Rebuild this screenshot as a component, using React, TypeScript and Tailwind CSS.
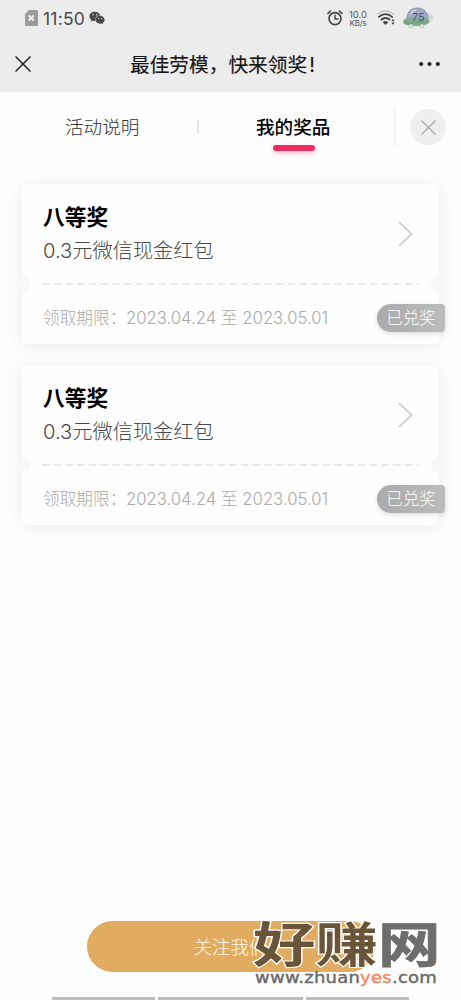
import { FaWeixin } from "react-icons/fa";

const prizes = [
  { id: 1, level: "八等奖", name: "0.3元微信现金红包", start: "2023.04.24", end: "2023.05.01", status: "已兑奖" },
  { id: 2, level: "八等奖", name: "0.3元微信现金红包", start: "2023.04.24", end: "2023.05.01", status: "已兑奖" },
];

type Prize = (typeof prizes)[number];

export default function App() {
  return (
    <div className="relative flex h-[1000px] w-[461px] flex-col overflow-hidden bg-[#fdfdfd] font-['Inter','Noto_Sans_CJK_SC',sans-serif]">
      <header className="h-[92px] shrink-0 bg-[#ececec]">
        <StatusBar />
        <TitleBar />
      </header>
      <Tabs />
      <main className="flex flex-col gap-[21px] px-[22px] pt-[22px]">
        {prizes.map((prize) => (
          <PrizeCard key={prize.id} prize={prize} />
        ))}
      </main>
      <footer className="mt-auto flex flex-col items-center">
        <button className="h-[51px] w-[288px] rounded-full bg-[#e2ac60] text-[18.500px] leading-[53px] font-light text-[#fff8ea]">
          关注我们
        </button>
        <div className="mt-[25px] flex h-[3px] w-[357px] gap-[3px]">
          <span className="w-[103px] bg-[#bdbdbd]" />
          <span className="w-[145px] bg-[#bdbdbd]" />
          <span className="flex-1 bg-[#bdbdbd]" />
        </div>
      </footer>
      <Watermark />
    </div>
  );
}

function StatusBar() {
  return (
    <div className="flex h-9 items-center pl-[25px] text-[#4a4a4a]">
      <svg className="h-4 w-[13px]" viewBox="0 0 13 16">
        <path d="M4 0h7.500Q13 0 13 1.500v13Q13 16 11.500 16h-10Q0 16 0 14.500V4Z" fill="#9b9b9b" />
        <path d="M3.800 5.500l5 5M8.800 5.500l-5 5" stroke="#f2f2f2" strokeWidth="1.900" />
      </svg>
      <span className="ml-[5px] w-[42px] pt-[2px] text-[17.500px] leading-5 tracking-[0.2px] whitespace-nowrap">11:50</span>
      <FaWeixin className="ml-[4px] size-[16px]" />
      <svg className="ml-[222px] size-4" viewBox="0 0 16 16" fill="none" stroke="#414141" strokeLinecap="round">
        <circle cx="8" cy="8.600" r="6" strokeWidth="1.600" />
        <path d="M8 5.200v3.800h3" strokeWidth="1.400" />
        <path d="M1 3.400l2.500-2.200M15 3.400l-2.500-2.200" strokeWidth="1.600" />
      </svg>
      <div className="ml-[5px] w-5 text-center leading-[9px] text-[#555]">
        <div className="text-[9.500px]">10.0</div>
        <div className="text-[8px] leading-[8px] tracking-[-0.2px]">KB/s</div>
      </div>
      <svg className="ml-[8px] h-4 w-[20px]" viewBox="0 0 20 16" fill="none">
        <path d="M1 4.500Q9.500-3 18 4.500" stroke="#c6c6c6" strokeWidth="1.300" />
        <path d="M2.300 7.300Q9.500 1 16.700 7.300" stroke="#444" strokeWidth="1.700" />
        <path d="M4.900 10Q9.500 6 14.100 10" stroke="#444" strokeWidth="1.700" />
        <path d="M6.700 12.300Q9.500 9.500 12.300 12.300L9.500 15Z" fill="#444" />
        <path d="M15.300 11.300l1.700-2.200L18.700 11.300ZM15.300 12.600l1.700 2.200 1.700-2.200Z" fill="#444" />
      </svg>
      <CarBattery />
    </div>
  );
}

function CarBattery() {
  return (
    <svg className="ml-[6px] h-[22px] w-[32px]" viewBox="0 0 32 22">
      <ellipse cx="26" cy="11" rx="5" ry="5" fill="#d5d7d5" />
      <path d="M5 12C5 4 10 1 15.500 1S26 5 26 12Z" fill="#a1a9c4" stroke="#7b849d" strokeWidth="0.800" />
      <path d="M9 7q1.500-4 5-4" fill="none" stroke="#dfe5ef" strokeWidth="1.200" />
      <path d="M1 14q3-4 10-3h14q3 1 2 5-4 3-12 3T2 17Z" fill="#82aa8e" />
      <path d="M2 15q5 2 9 1t14-1" fill="none" stroke="#6b987b" />
      <circle cx="9" cy="19" r="1.900" fill="#f1f1e9" stroke="#99af9d" strokeWidth="0.700" />
      <circle cx="20" cy="19" r="1.900" fill="#f1f1e9" stroke="#99af9d" strokeWidth="0.700" />
      <text x="10" y="14" fontSize="11" fill="#4b5678">75</text>
    </svg>
  );
}

function TitleBar() {
  return (
    <div className="flex h-14 items-center pr-[21px] pl-[15px]">
      <svg className="size-4" viewBox="0 0 16 16" stroke="#222" strokeWidth="1.500">
        <path d="M0.500 0.500l15 15M15.500 0.500l-15 15" />
      </svg>
      <h1 className="ml-[99px] pt-px text-[19.700px] leading-7 whitespace-nowrap text-[#161616] [-webkit-text-stroke:0.15px_#161616]">
        最佳劳模，快来领奖<span className="ml-[2px]">!</span>
      </h1>
      <svg className="ml-auto h-1 w-[21px]" viewBox="0 0 21 4" fill="#161616">
        <circle cx="2.200" cy="2" r="2" />
        <circle cx="10.500" cy="2" r="2" />
        <circle cx="18.800" cy="2" r="2" />
      </svg>
    </div>
  );
}

function Tabs() {
  return (
    <nav className="flex h-[70px] shrink-0 items-center text-[18.600px] leading-7 whitespace-nowrap">
      <a className="ml-[65px] w-[75px] font-light text-[#333]">活动说明</a>
      <span className="ml-[57px] h-[14px] w-[2px] bg-[#e6e6e6]" />
      <a className="relative ml-[57px] w-[75px] font-medium text-black">
        我的奖品
        <span className="absolute top-[32px] left-[17px] h-[6px] w-[42px] rounded-full bg-[#ea2e63] shadow-[0_2px_5px_#f9b8ca]" />
      </a>
      <span className="ml-[61px] h-[38px] w-[4px] bg-linear-to-r from-transparent to-[#f0f0f0]" />
      <button className="ml-[14px] flex size-9 items-center justify-center rounded-full bg-[#efefef]">
        <svg className="size-[15px]" viewBox="0 0 15 15" stroke="#aaa" strokeWidth="1.400">
          <path d="M0.500 0.500l14 14M14.500 0.500l-14 14" />
        </svg>
      </button>
    </nav>
  );
}

function PrizeCard({ prize }: { prize: Prize }) {
  return (
    <section className="relative h-[160px] rounded-[6px] bg-[#fefefe] shadow-[0_2px_18px_rgba(0,0,0,0.07)]">
      <div className="flex h-[99px] items-center justify-between pr-[26px] pl-[21px]">
        <div className="whitespace-nowrap">
          <h2 className="text-[21.700px] leading-[34px] font-bold text-black">{prize.level}</h2>
          <p className="text-[20.200px] leading-[34px] font-light text-[#4a4a4a]">{prize.name}</p>
        </div>
        <svg className="h-[26px] w-[15px]" viewBox="0 0 15 26" fill="none" stroke="#c9c9c9" strokeWidth="1.700">
          <path d="M1 1l12.500 12L1 25" />
        </svg>
      </div>
      <svg className="mx-[20px] block h-[2px] w-[377px]" viewBox="0 0 377 2">
        <path d="M0 1h377" stroke="#e2e2e2" strokeWidth="1.500" strokeDasharray="7.500 4.200" />
      </svg>
      <div className="flex h-[59px] items-center pt-[8px] pl-[21px] text-[16.700px] font-light text-[#aaa]">
        <span className="w-[83px] whitespace-nowrap">领取期限：</span>
        <span className="whitespace-nowrap">
          {prize.start} 至 {prize.end}
        </span>
        <span className="-mt-px -mr-[6px] ml-auto h-7 w-[68px] rounded-l-[14px] rounded-r-[4px] bg-linear-to-r from-[#aaa] to-[#bcbcbc] text-center text-[16.500px] leading-7 text-white shadow-[0_2px_5px_rgba(0,0,0,0.12)]">
          {prize.status}
        </span>
      </div>
      <span className="absolute top-[92px] -left-px h-4 w-[9px] rounded-r-full bg-[#f7f7f7]" />
      <span className="absolute top-[92px] -right-px h-4 w-[9px] rounded-l-full bg-[#f7f7f7]" />
    </section>
  );
}

function Watermark() {
  return (
    <div className="absolute top-[920px] left-[253px] w-[190px] whitespace-nowrap">
      <div className="flex h-[50px] origin-top-left scale-y-[0.77] text-[62.500px] leading-[63px] font-bold text-[#6b5539] [-webkit-text-stroke:3px_#fff] [paint-order:stroke_fill]">
        <span>好</span>
        <span>赚</span>
        <span className="text-[#6d6d6d] [-webkit-text-stroke:1px_#6d6d6d]">网</span>
      </div>
      <div className="ml-[2px] origin-left scale-x-[1.2] font-['DejaVu_Sans'] text-[15px] leading-4 tracking-[0.2px] text-[#6b6b6b] [-webkit-text-stroke:0.4px_currentColor]">
        www.zhuan<span className="text-[#f58663]">yes</span>.com
      </div>
    </div>
  );
}
